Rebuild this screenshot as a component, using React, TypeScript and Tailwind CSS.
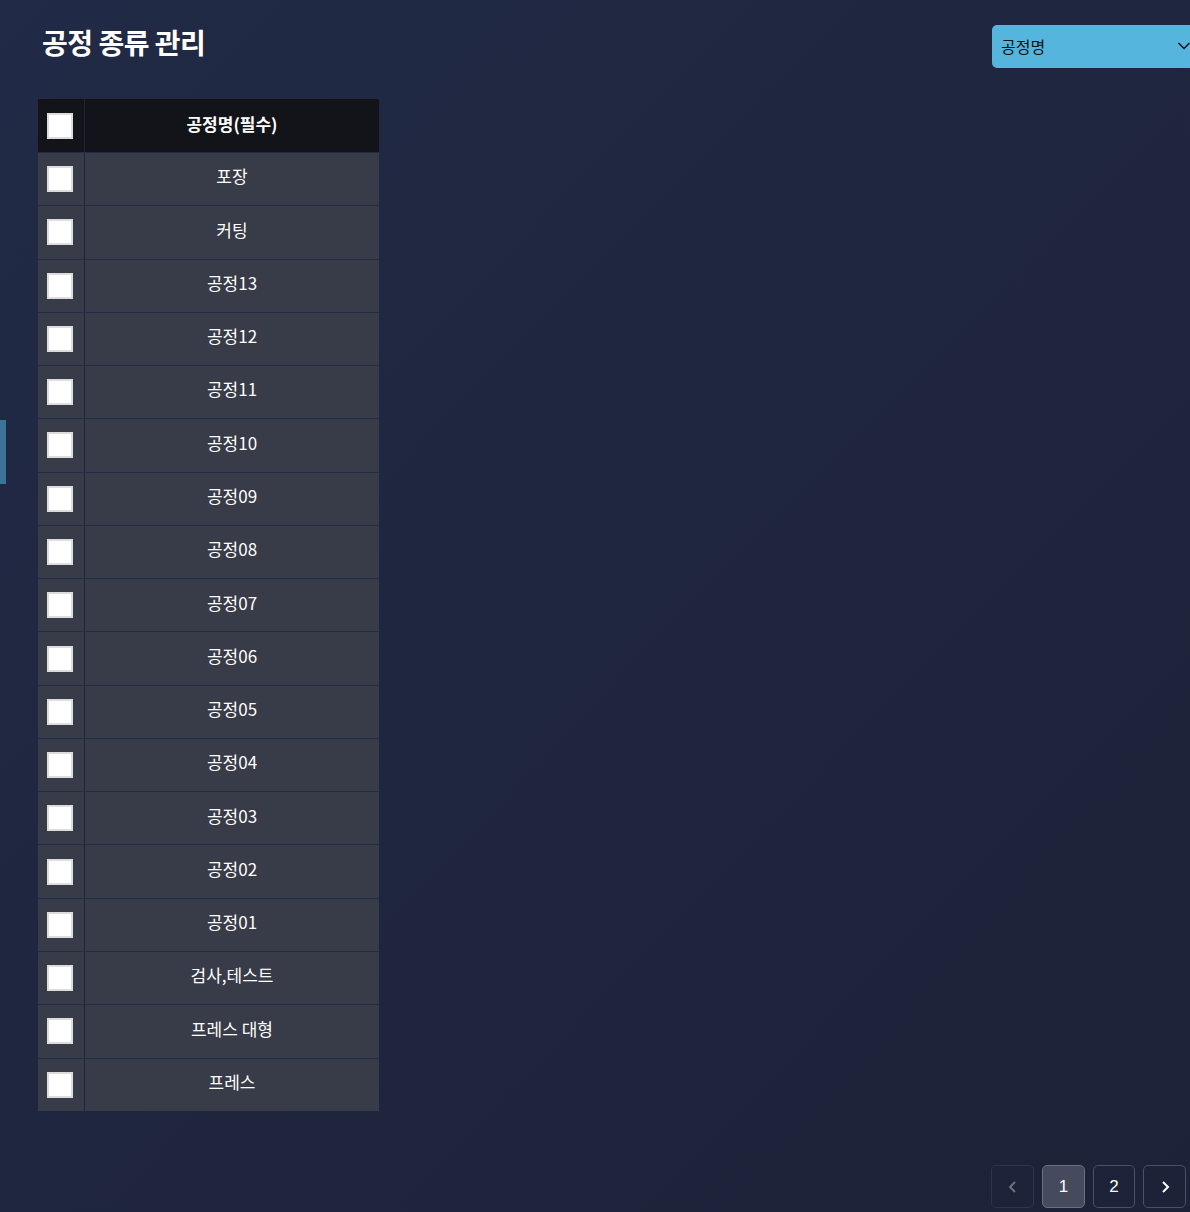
import React from "react";

const rows = [
  "포장",
  "커팅",
  "공정13",
  "공정12",
  "공정11",
  "공정10",
  "공정09",
  "공정08",
  "공정07",
  "공정06",
  "공정05",
  "공정04",
  "공정03",
  "공정02",
  "공정01",
  "검사,테스트",
  "프레스 대형",
  "프레스",
];

function Box() {
  return <div className="w-[26px] h-[26px] bg-white border-2 border-[#dcdcdc]" />;
}

export default function App() {
  return (
    <div
      className="relative w-[1190px] h-[1212px] overflow-hidden bg-gradient-to-br from-[#212a46] to-[#1c2237]"
      style={{ fontFamily: '"Noto Sans CJK KR", "Noto Sans", sans-serif' }}
    >
      <div className="absolute left-0 top-[420px] w-[6px] h-[64px] bg-[#3a7597]" />
      <div className="flex justify-between items-start">
        <h1 className="ml-[42px] mt-[22px] text-[28px] font-bold text-white tracking-[-0.5px] leading-[40px]">
          공정 종류 관리
        </h1>
        <div className="mt-[25px] w-[220px] h-[43px] shrink-0 rounded-l-[5px] bg-[#55b5dc] flex items-center pl-[9px] pb-[2px] text-[16px] text-[#111] -mr-[22px]">
          <span className="flex-1">공정명</span>
          <svg width="16" height="10" viewBox="0 0 16 10" className="mr-[19px]">
            <path d="M1.5 2 L7 7.5 L12.5 2" stroke="#111" strokeWidth="1.5" fill="none" />
          </svg>
        </div>
      </div>
      <div className="ml-[38px] mt-[31px] w-[341px]">
        <div className="flex h-[53px] bg-[#131419]">
          <div className="w-[47px] pr-[3px] flex items-center justify-center border-r border-[#1f2535]">
            <Box />
          </div>
          <div className="flex-1 flex items-center justify-center pb-[3px] text-[17px] font-bold text-white">
            공정명(필수)
          </div>
        </div>
        {rows.map((r) => (
          <div key={r} className="flex h-[53.28px] bg-[#383b48] border-t border-[#232c45]">
            <div className="w-[47px] pr-[3px] flex items-center justify-center border-r border-[#1f2535]">
              <Box />
            </div>
            <div className="flex-1 flex items-center justify-center pb-[6px] text-[17px] text-white">
              {r}
            </div>
          </div>
        ))}
      </div>
      <div className="absolute right-[4px] bottom-[4px] flex gap-[8px]">
        <div className="w-[43px] h-[43px] rounded-[5px] border border-[#2e3548] flex items-center justify-center">
          <svg width="12" height="14" viewBox="0 0 12 14">
            <path d="M8 2 L3 7 L8 12" stroke="#6b7280" strokeWidth="2" fill="none" />
          </svg>
        </div>
        <div className="w-[43px] h-[43px] rounded-[5px] border border-[#6b7080] bg-[#454a5c] flex items-center justify-center text-white text-[17px]" style={{ fontFamily: '"Liberation Sans", Arial, sans-serif' }}>
          1
        </div>
        <div className="w-[42px] h-[43px] rounded-[5px] border border-[#4a5166] flex items-center justify-center text-white text-[17px]" style={{ fontFamily: '"Liberation Sans", Arial, sans-serif' }}>
          2
        </div>
        <div className="w-[43px] h-[43px] rounded-[5px] border border-[#4a5166] flex items-center justify-center">
          <svg width="12" height="14" viewBox="0 0 12 14">
            <path d="M4 2 L9 7 L4 12" stroke="#ffffff" strokeWidth="2" fill="none" />
          </svg>
        </div>
      </div>
    </div>
  );
}
